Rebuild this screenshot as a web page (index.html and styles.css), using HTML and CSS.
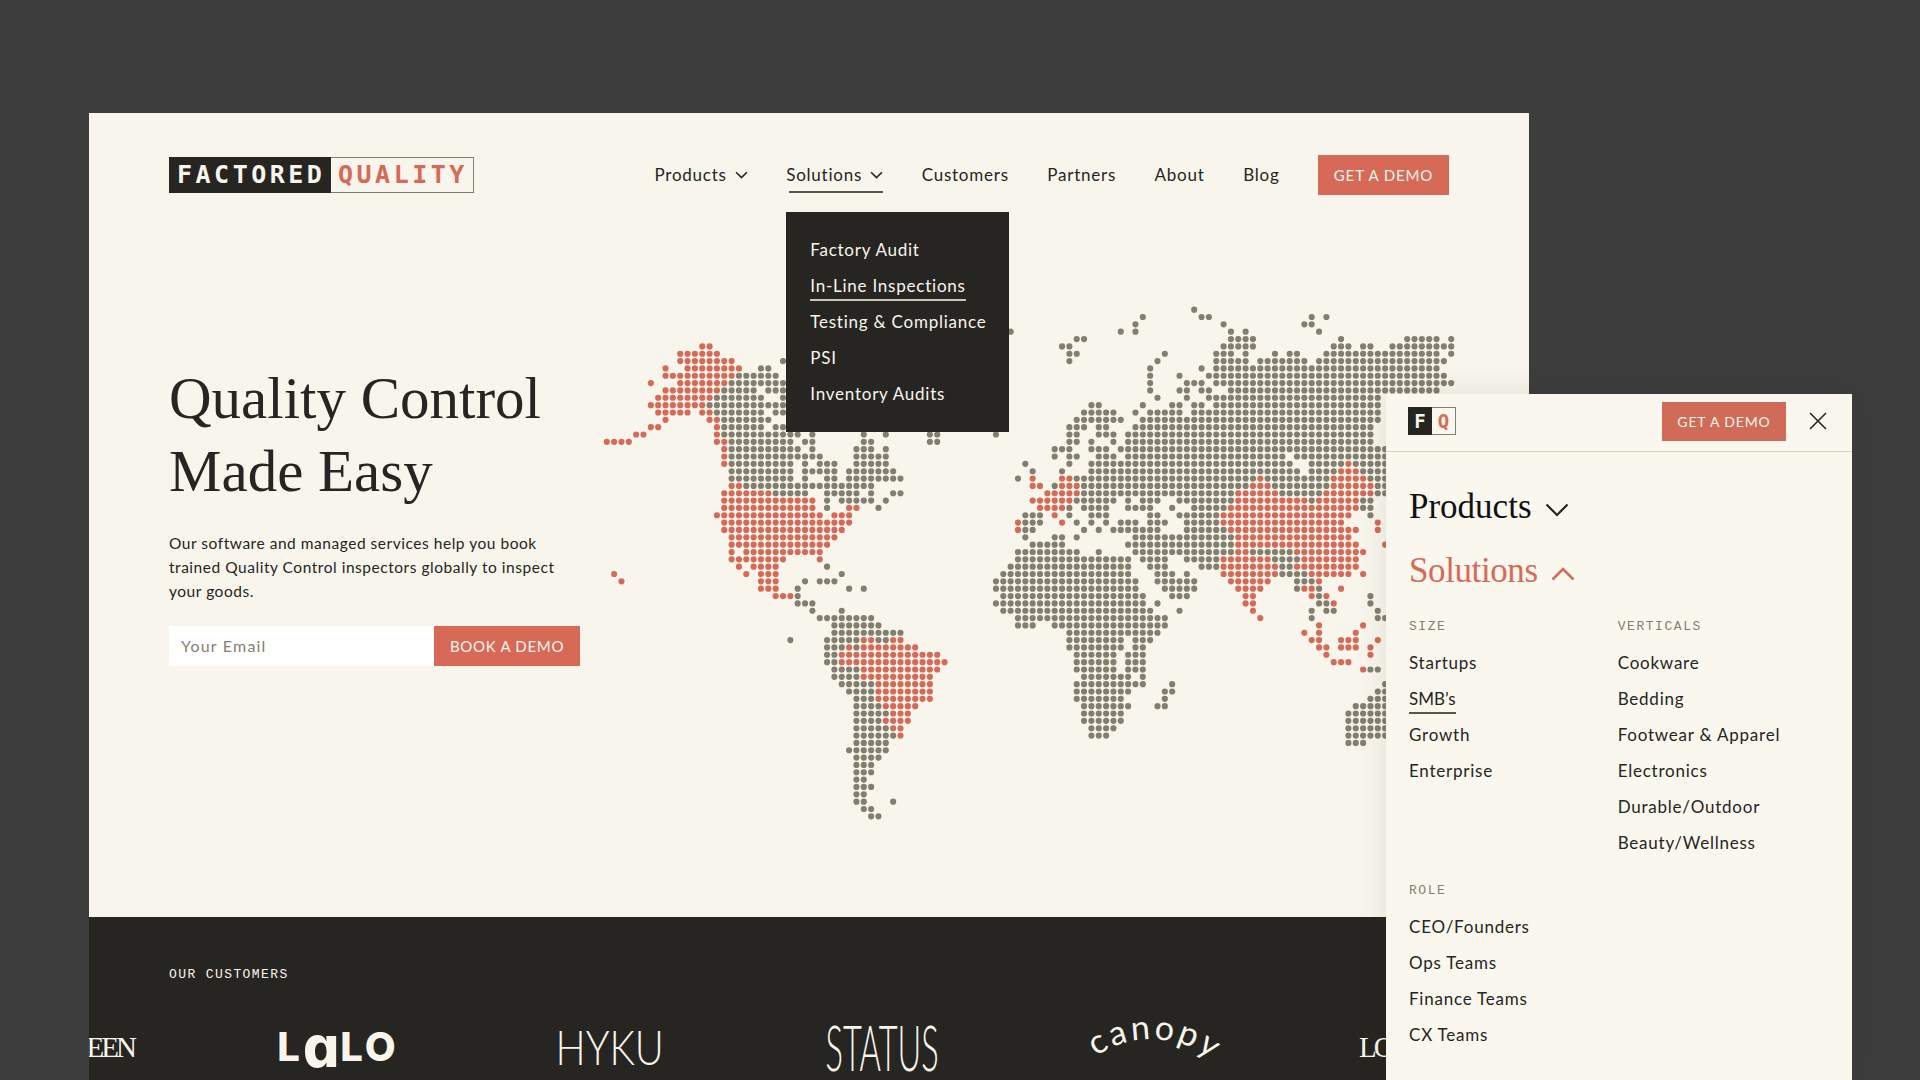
FILE: index.html
```html
<!DOCTYPE html>
<html lang="en">
  <head>
    <meta charset="UTF-8" />
    <meta name="viewport" content="width=device-width, initial-scale=1.0" />
    <title>Factored Quality</title>
    <link rel="stylesheet" href="styles.css">
  </head>
  <body>
    <div class="site">
      <header class="topbar">
        <a class="logo" href="#">
          <span class="logo-dark">FACTORED</span>
          <span class="logo-light">QUALITY</span>
        </a>
        <nav class="nav">
          <div class="nav-item">
            Products
            <svg class="chevron" viewBox="0 0 12 8"><path d="M1 1l5 5 5-5" /></svg>
          </div>
          <div class="nav-item open">
            Solutions
            <svg class="chevron" viewBox="0 0 12 8"><path d="M1 1l5 5 5-5" /></svg>
            <ul class="dropdown">
              <li><a href="#">Factory Audit</a></li>
              <li><a href="#" class="active">In-Line Inspections</a></li>
              <li><a href="#">Testing &amp; Compliance</a></li>
              <li><a href="#">PSI</a></li>
              <li><a href="#">Inventory Audits</a></li>
            </ul>
          </div>
          <div class="nav-item">Customers</div>
          <div class="nav-item">Partners</div>
          <div class="nav-item">About</div>
          <div class="nav-item">Blog</div>
          <a class="btn btn-nav" href="#">GET A DEMO</a>
        </nav>
      </header>

      <main class="hero">
        <!-- one unit = one dot, stroke-dasharray puts a dot on each integer -->
        <svg class="map" viewBox="-0.5 -0.5 116 70">
          <path class="dots-grey" d="
            M24 7h.01
            M21 8H22.01
            M18 9H23.01
            M17 10H24.01
            M16 11H20.01M22 11H24.01
            M15 12H21.01M24 12h.01
            M14 13H24.01
            M15 14H21.01M23 14H24.01
            M16 15H22.01
            M16 16H21.01M23 16H24.01
            M16 17H26.01M28 17h.01M35 17h.01M38 17h.01M44 17H45.01M53 17h.01
            M17 18H25.01M27 18H28.01M35 18H36.01M44 18H45.01
            M17 19H26.01M28 19h.01M34 19H36.01M38 19h.01
            M17 20H29.01M34 20H38.01
            M17 21H25.01M27 21h.01M29 21H31.01M34 21H38.01
            M17 22H25.01M27 22H31.01M33 22H39.01
            M17 23H25.01M27 23h.01M30 23H31.01M33 23H40.01
            M19 24H36.01
            M23 25H27.01M30 25H34.01M36 25h.01M39 25H40.01
            M30 26h.01M32 26H36.01M38 26h.01
            M30 27h.01M37 27h.01
            M30 35h.01
            M32 36h.01
            M27 37h.01M29 37H31.01M53 37h.01
            M26 38h.01M33 38h.01M35 38h.01M53 38h.01
            M26 39h.01
            M26 40H28.01M53 40h.01
            M28 41h.01M32 41h.01
            M29 42H36.01
            M31 43H37.01
            M31 44H40.01
            M25 45h.01M30 45H34.01M37 45H38.01
            M30 46H32.01M34 46h.01
            M30 47H31.01
            M30 48H31.01
            M31 49H34.01
            M31 50H34.01
            M32 51H36.01
            M33 52H36.01
            M34 53H36.01
            M34 54H37.01
            M34 55H38.01
            M34 56H37.01
            M34 57H38.01
            M34 58H39.01
            M34 59H38.01
            M33 60H38.01
            M34 61H37.01
            M34 62H36.01
            M34 63H36.01
            M34 64H35.01
            M34 65H36.01
            M34 66H35.01
            M34 67H35.01M39 67h.01
            M35 68H36.01
            M36 69H37.01
            M80 0h.01
            M73 1h.01M81 1H82.01M96 1h.01M98 1h.01
            M72 2h.01M84 2h.01M95 2H96.01
            M55 3h.01M70 3h.01M72 3h.01M85 3h.01M87 3h.01M97 3h.01
            M64 4H65.01M85 4H88.01M100 4h.01M109 4H113.01M115 4h.01
            M62 5H63.01M84 5H88.01M99 5H101.01M103 5H104.01M107 5H115.01
            M63 6H64.01M76 6h.01M83 6H85.01M87 6h.01M91 6h.01M93 6H94.01M98 6H113.01M115 6h.01
            M63 7h.01M75 7h.01M83 7H87.01M89 7H95.01M97 7H114.01
            M74 8h.01M81 8h.01M83 8H113.01
            M74 9h.01M78 9h.01M82 9H114.01
            M74 10h.01M79 10H81.01M83 10H115.01
            M74 11h.01M78 11H79.01M81 11H82.01M85 11H113.01
            M75 12h.01M79 12h.01M82 12H105.01
            M66 13H67.01M73 13h.01M77 13H78.01M80 13H81.01M83 13H105.01
            M65 14H69.01M72 14h.01M74 14H78.01M80 14H105.01
            M64 15H70.01M73 15H105.01
            M63 16H65.01M67 16H68.01M72 16H104.01
            M63 17H64.01M67 17H69.01M71 17H104.01
            M63 18H64.01M66 18h.01M69 18h.01M71 18H104.01
            M61 19H63.01M66 19H68.01M70 19H106.01
            M61 20h.01M63 20H64.01M67 20H69.01M71 20H92.01M94 20H106.01
            M57 21h.01M63 21h.01M66 21H93.01M96 21H100.01M102 21H106.01
            M58 22h.01M62 22h.01M66 22H94.01M96 22H99.01M103 22H106.01
            M56 23h.01M64 23H88.01M90 23H98.01M104 23H106.01
            M61 24h.01M65 24H87.01M91 24H98.01M105 24H106.01
            M65 25H85.01M92 25H97.01M105 25H106.01
            M64 26H69.01M71 26h.01M73 26H75.01M78 26H85.01M96 26h.01M103 26H104.01
            M63 27h.01M65 27H68.01M71 27H74.01M77 27h.01M80 27H84.01M103 27H104.01
            M57 28H59.01M63 28h.01M66 28H68.01M74 28H75.01M78 28H83.01M104 28h.01
            M57 29H59.01M64 29h.01M66 29h.01M68 29h.01M70 29H72.01M74 29H76.01M79 29H83.01
            M57 30H58.01M65 30h.01M67 30h.01M69 30H75.01M79 30H84.01
            M57 31h.01M61 31H62.01M64 31h.01M72 31H85.01
            M58 32H62.01M71 32H85.01
            M56 33H64.01M67 33h.01M72 33H85.01M88 33H93.01
            M56 34H71.01M73 34H76.01M79 34H83.01M91 34H94.01
            M55 35H71.01M74 35H76.01M81 35H83.01M92 35H93.01
            M54 36H71.01M75 36H77.01M79 36h.01M92 36H95.01
            M54 37H72.01M75 37H80.01M94 37H96.01
            M54 38H72.01M76 38H80.01M94 38h.01M97 38h.01
            M54 39H73.01M77 39H79.01M97 39h.01M104 39h.01
            M54 40H73.01M75 40h.01M97 40H98.01M104 40h.01
            M54 41H74.01M78 41h.01M96 41h.01M98 41H99.01M105 41h.01
            M56 42H76.01M96 42h.01M105 42H106.01
            M56 43H58.01M61 43H76.01
            M63 44H75.01
            M63 45H70.01M72 45H74.01
            M63 46H70.01M72 46H73.01
            M64 47H69.01M71 47H73.01
            M64 48H69.01M71 48H73.01
            M64 49H69.01M71 49H73.01M104 49H105.01
            M65 50H71.01M73 50h.01
            M64 51H73.01M77 51h.01M106 51h.01
            M64 52H71.01M76 52H77.01M105 52H106.01
            M64 53H70.01M76 53h.01M104 53H106.01
            M65 54H71.01M75 54H76.01M102 54H106.01
            M65 55H70.01M101 55H106.01
            M65 56H70.01M101 56H106.01
            M66 57H69.01M101 57H106.01
            M66 58H68.01M101 58H106.01
            M101 59H103.01" />
          <path class="dots-red" d="
            M13 5H14.01
            M10 6H15.01
            M10 7H17.01
            M8 8h.01M11 8H18.01
            M8 9H17.01
            M6 10h.01M10 10H16.01
            M8 11H15.01
            M7 12H14.01
            M6 13H13.01
            M7 14H11.01M13 14H14.01
            M8 15h.01M14 15H15.01
            M6 16H7.01M15 16h.01
            M4 17H5.01M15 17h.01
            M0 18H3.01M15 18H16.01
            M16 19h.01
            M16 20h.01
            M16 21h.01
            M17 24H18.01
            M16 25H22.01
            M16 26H28.01
            M16 27H28.01M33 27H34.01
            M15 28H29.01M31 28H33.01
            M16 29H33.01
            M16 30H32.01
            M17 31H31.01
            M17 32H30.01
            M17 33h.01M19 33H29.01
            M17 34H24.01M29 34h.01
            M18 35h.01M20 35H23.01
            M1 36h.01M19 36h.01M21 36H23.01
            M2 37h.01M21 37H23.01
            M21 38H23.01
            M23 39H25.01
            M35 45H36.01M39 45H40.01
            M33 46h.01M35 46H42.01
            M32 47H45.01
            M32 48H46.01
            M35 49H45.01
            M35 50H44.01
            M37 51H44.01
            M37 52H44.01
            M37 53H44.01
            M38 54H42.01
            M39 55H41.01
            M38 56H41.01
            M39 57H40.01
            M40 58h.01
            M101 21h.01
            M100 22H102.01
            M58 23h.01M62 23H63.01M89 23h.01M99 23H103.01
            M58 24H59.01M62 24H64.01M88 24H90.01M99 24H104.01
            M60 25H64.01M86 25H91.01M98 25H104.01
            M58 26H63.01M86 26H95.01M97 26H102.01
            M59 27H62.01M85 27H102.01
            M61 28h.01M84 28H101.01
            M56 29h.01M62 29h.01M84 29H100.01M105 29h.01
            M56 30h.01M85 30H102.01M105 30h.01
            M86 31H101.01
            M86 32H102.01M106 32h.01
            M86 33H87.01M94 33H103.01
            M84 34H90.01M95 34H102.01
            M84 35H91.01M94 35H102.01
            M84 36H91.01M96 36H101.01M103 36h.01
            M85 37H90.01M97 37h.01
            M86 38H89.01M95 38H96.01M100 38h.01
            M87 39H88.01M96 39h.01M98 39h.01
            M87 40H88.01M99 40h.01
            M88 41h.01
            M89 42h.01
            M97 43h.01M103 43h.01
            M95 44h.01M97 44h.01M102 44h.01
            M96 45H97.01M100 45H102.01M105 45h.01
            M97 46H98.01M100 46H102.01M104 46h.01
            M98 47h.01M104 47h.01
            M99 48H101.01
            M103 49h.01" />
        </svg>

        <div class="hero-copy">
          <h1>Quality Control<br />Made Easy</h1>
          <p>Our software and managed services help you book trained Quality Control inspectors globally to inspect your goods.</p>
          <form class="signup">
            <input type="text" placeholder="Your Email" />
            <button type="button" class="btn btn-signup">BOOK A DEMO</button>
          </form>
        </div>
      </main>

      <footer class="customers">
        <div class="customers-label">OUR CUSTOMERS</div>
        <div class="logo-track">
          <div class="brand brand-left">GREEN</div>
          <div class="brand brand-lalo">L<span>a</span>LO</div>
          <div class="brand brand-hyku"><span>HYKU</span></div>
          <div class="brand brand-status"><span>STATUS</span></div>
          <div class="brand">
            <svg class="brand-canopy" viewBox="0 0 140 50">
              <defs>
                <path id="canopy_arc" d="M-4 58C12 8 114 -2 146 62" />
              </defs>
              <text><textPath href="#canopy_arc" startOffset="50%" text-anchor="middle">canopy</textPath></text>
            </svg>
          </div>
          <div class="brand brand-right">LO</div>
        </div>
      </footer>
    </div>

    <aside class="panel">
      <div class="panel-top">
        <a class="logo-small" href="#"><span class="logo-small-f">F</span><span class="logo-small-q">Q</span></a>
        <a class="btn btn-panel" href="#">GET A DEMO</a>
        <svg class="close" viewBox="0 0 18 18"><path d="M1 1l16 16M17 1L1 17" /></svg>
      </div>
      <div class="panel-body">
        <div class="panel-heading">
          Products
          <svg class="panel-chevron" viewBox="0 0 24 14"><path d="M1.5 1.5L12 12 22.5 1.5" /></svg>
        </div>
        <div class="panel-heading current">
          Solutions
          <svg class="panel-chevron" viewBox="0 0 24 14"><path d="M1.5 12.5L12 2l10.5 10.5" /></svg>
        </div>
        <div class="panel-grid">
          <section>
            <h4>SIZE</h4>
            <ul class="panel-list">
              <li><a href="#">Startups</a></li>
              <li><a href="#" class="active">SMB’s</a></li>
              <li><a href="#">Growth</a></li>
              <li><a href="#">Enterprise</a></li>
            </ul>
          </section>
          <section>
            <h4>VERTICALS</h4>
            <ul class="panel-list">
              <li><a href="#">Cookware</a></li>
              <li><a href="#">Bedding</a></li>
              <li><a href="#">Footwear &amp; Apparel</a></li>
              <li><a href="#">Electronics</a></li>
              <li><a href="#">Durable/Outdoor</a></li>
              <li><a href="#">Beauty/Wellness</a></li>
            </ul>
          </section>
          <section>
            <h4>ROLE</h4>
            <ul class="panel-list">
              <li><a href="#">CEO/Founders</a></li>
              <li><a href="#">Ops Teams</a></li>
              <li><a href="#">Finance Teams</a></li>
              <li><a href="#">CX Teams</a></li>
            </ul>
          </section>
        </div>
      </div>
    </aside>
  </body>
</html>
```
FILE: styles.css
```css
body {
  font-family: Lato, Arial, sans-serif;
  font-size: 17px;
  letter-spacing: 0.77px;
  height: 1080px;
  margin: 0;
  background-color: #3d3d3d;
  color: #262521;
  position: relative;
  overflow: hidden;
}
a {
  color: inherit;
  text-decoration: none;
}
ul {
  list-style: none;
  margin: 0;
  padding: 0;
}

/* the big desktop page */
.site {
  position: absolute;
  left: 89px;
  top: 113px;
  width: 1440px;
  height: 967px;
  background-color: #f8f5ec;
  display: flex;
  flex-direction: column;
  overflow: hidden;
}
.topbar {
  display: flex;
  justify-content: space-between;
  align-items: center;
  height: 40px;
  padding: 42px 80px 0;
  flex: none;
}
.logo {
  display: flex;
  height: 36px;
  font-family: "DejaVu Sans Mono", monospace;
  font-size: 25px;
  font-weight: bold;
  letter-spacing: 3.5px;
  line-height: 36px;
}
.logo-dark {
  width: 162px;
  padding-left: 8px;
  box-sizing: border-box;
  background-color: #262521;
  color: #f8f5ec;
}
.logo-light {
  width: 143px;
  padding-left: 7px;
  box-sizing: border-box;
  color: #d66a57;
  border: 1px solid #837f6f;
  border-left: 0;
  line-height: 34px;
}
.nav {
  display: flex;
  align-items: center;
  gap: 38.5px;
}
.nav-item {
  position: relative;
  display: flex;
  align-items: center;
  gap: 8px;
  line-height: 26px;
}
.chevron {
  width: 13px;
  height: 9px;
}
.chevron path {
  fill: none;
  stroke: #262521;
  stroke-width: 1.5;
}
.nav-item.open::after {
  content: "";
  position: absolute;
  left: 3px;
  right: 0;
  top: 29px;
  height: 2px;
  background-color: #5b5848;
}
.dropdown {
  position: absolute;
  left: 0;
  top: 50px;
  z-index: 2;
  width: 223px;
  padding: 20px 24px;
  box-sizing: border-box;
  background-color: #262521;
  color: #f8f5ec;
  white-space: nowrap;
}
.dropdown li,
.panel-list li {
  height: 36px;
}
.dropdown a,
.panel-list a {
  display: inline-block;
  margin-top: 5px;
  line-height: 26px;
  border-bottom: 2px solid transparent;
}
.dropdown a.active {
  border-color: #c9c5b5;
}
.panel-list a.active {
  border-color: #5b5848;
  letter-spacing: 0;
}

.btn {
  display: flex;
  align-items: center;
  justify-content: center;
  background-color: #d66a57;
  color: #f8f5ec;
  font-family: Lato, Arial, sans-serif;
  font-size: 15px;
  letter-spacing: 0.85px;
  border: 0;
}
.btn-nav {
  width: 131px;
  height: 40px;
}

/* hero with the dotted map behind */
.hero {
  position: relative;
  height: 722px;
  flex: none;
}
.map {
  position: absolute;
  left: 514px;
  top: 110.6px;
  width: 852px;
  height: 514px;
}
.map path {
  fill: none;
  stroke-width: 0.84;
  stroke-linecap: round;
  stroke-dasharray: 0 1;
}
.dots-grey {
  stroke: #837f6f;
}
.dots-red {
  stroke: #d66a57;
}
.hero-copy {
  position: relative;
  padding: 167px 0 0 80px;
  width: 395px;
}
h1 {
  font-family: "Liberation Serif", serif;
  font-size: 59px;
  font-weight: normal;
  letter-spacing: 0;
  line-height: 73px;
  white-space: nowrap;
  margin: 0 0 23px;
}
.hero-copy p {
  font-size: 15.5px;
  letter-spacing: 0.53px;
  line-height: 24.2px;
  margin: 0 0 22px;
}
.signup {
  display: flex;
  height: 40px;
  width: 411px;
}
.signup input {
  width: 265px;
  padding: 0 12px;
  box-sizing: border-box;
  border: 0;
  background-color: #fff;
  font-family: Lato, Arial, sans-serif;
  font-size: 16px;
  letter-spacing: 1.2px;
}
.signup input::placeholder {
  color: #857f70;
}
.btn-signup {
  width: 146px;
  letter-spacing: 0.7px;
}

/* dark strip with customer logos */
.customers {
  flex: 1;
  background-color: #262521;
  color: #f8f5ec;
  padding-top: 50px;
  overflow: hidden;
}
.customers-label {
  font-family: "Liberation Mono", monospace;
  font-size: 13px;
  letter-spacing: 1.4px;
  line-height: 16px;
  margin-left: 80px;
}
.logo-track {
  display: grid;
  grid-template-columns: repeat(6, 272px);
  grid-template-rows: 60px;
  margin: 34px 0 0 -159px;
}
.brand {
  display: flex;
  align-items: center;
  justify-content: center;
  line-height: 1;
}
.brand-left {
  justify-content: flex-end;
  padding-right: 68px;
  font-family: "Liberation Serif", serif;
  font-size: 29px;
  letter-spacing: -3px;
}
.brand-right {
  justify-content: flex-start;
  padding-left: 69px;
  font-family: "Liberation Serif", serif;
  font-size: 29px;
  letter-spacing: -3px;
}
.brand-lalo {
  font-family: Inter, sans-serif;
  font-size: 40px;
  font-weight: 800;
  letter-spacing: 3px;
  font-feature-settings: "cv11";
}
.brand-lalo span {
  font-size: 57px;
  line-height: 40px;
  letter-spacing: 1px;
}
.brand-hyku span {
  display: block;
  font-family: Lato, sans-serif;
  font-size: 47px;
  font-weight: 300;
  letter-spacing: 0;
  transform: scaleX(0.85);
}
.brand-status span {
  display: block;
  font-family: Lato, sans-serif;
  font-size: 64px;
  font-weight: 300;
  letter-spacing: 0;
  line-height: 50px;
  transform: scaleX(0.51);
}
.brand-canopy {
  width: 140px;
  height: 50px;
  overflow: visible;
  font-family: Lato, sans-serif;
  font-size: 34px;
  font-weight: 400;
  letter-spacing: 3px;
  fill: #f8f5ec;
}

/* the phone sized menu on top */
.panel {
  position: absolute;
  left: 1386px;
  top: 394px;
  width: 466px;
  bottom: 0;
  background-color: #faf7ee;
  box-shadow: 0 0 30px rgba(38, 37, 33, 0.1);
}
.panel-top {
  display: flex;
  align-items: center;
  height: 54px;
  padding: 0 25px 3px 22px;
  border-bottom: 1.5px solid #d8d4c4;
}
.logo-small {
  display: flex;
  width: 48px;
  height: 28px;
  font-family: "DejaVu Sans Mono", monospace;
  font-size: 19px;
  font-weight: bold;
  line-height: 28px;
  text-align: center;
  letter-spacing: 0;
}
.logo-small-f {
  width: 24px;
  background-color: #262521;
  color: #f8f5ec;
}
.logo-small-q {
  width: 24px;
  box-sizing: border-box;
  color: #d66a57;
  border: 1px solid #837f6f;
  border-left: 0;
  line-height: 26px;
}
.btn-panel {
  width: 124px;
  height: 39px;
  margin-left: auto;
  font-size: 14px;
  background-color: #d06b58;
}
.close {
  width: 18px;
  height: 18px;
  margin-left: 23px;
}
.close path {
  fill: none;
  stroke: #262521;
  stroke-width: 1.6;
}
.panel-body {
  padding: 33px 0 0 23px;
}
.panel-heading {
  display: flex;
  align-items: center;
  gap: 13px;
  height: 44px;
  margin-bottom: 20px;
  font-family: "Liberation Serif", serif;
  font-size: 35px;
  letter-spacing: 0;
  color: #111;
}
.panel-heading.current {
  color: #d66a57;
  letter-spacing: -0.4px;
  margin-bottom: 26px;
}
.panel-chevron {
  width: 24px;
  height: 14px;
  margin-top: 6px;
}
.panel-chevron path {
  fill: none;
  stroke: #262521;
  stroke-width: 2.2;
}
.current .panel-chevron path {
  stroke: #d66a57;
  stroke-width: 2.6;
}
.panel-grid {
  display: grid;
  grid-template-columns: 208.7px 1fr;
  row-gap: 22px;
}
h4 {
  font-family: "Liberation Mono", monospace;
  font-size: 13px;
  font-weight: normal;
  letter-spacing: 1.55px;
  line-height: 16px;
  color: #857f70;
  margin: 0 0 10px;
}
```
